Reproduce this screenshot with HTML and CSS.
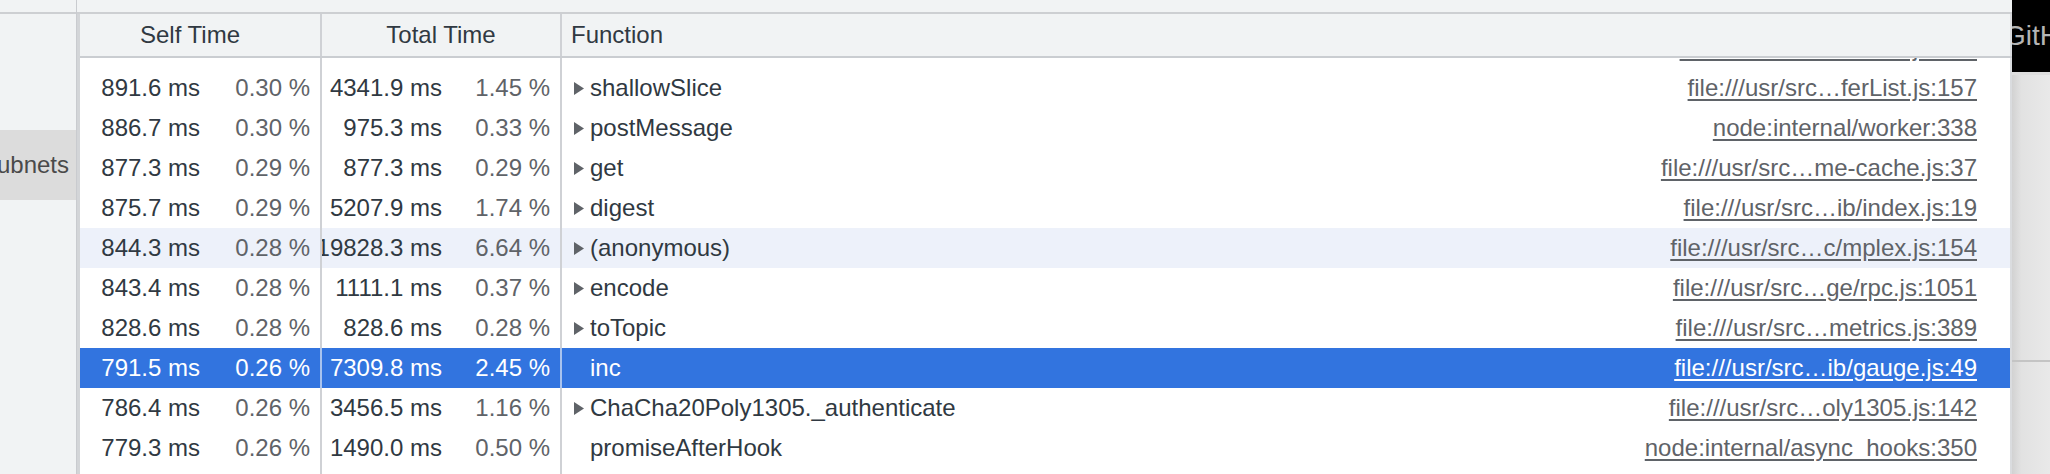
FILE: index.html
```html
<!DOCTYPE html>
<html>
<head>
<meta charset="utf-8">
<link rel="stylesheet" href="styles.css">
</head>
<body>
<div class="app">
  <aside class="side">
    <div class="side-top"></div>
    <div class="side-body">
      <div class="side-item"><span>Subnets</span></div>
    </div>
  </aside>
  <main class="main">
    <div class="topbar"></div>
    <div class="table">
      <div class="head">
        <div class="hcell c1 hself">Self Time</div>
        <div class="hcell c2 hcenter">Total Time</div>
        <div class="hcell c3 hfunc">Function</div>
      </div>
      <div class="body">
        <div class="row partial">
          <div class="cell c1"></div>
          <div class="cell c2"></div>
          <div class="cell c3 func"><span class="name"></span><span class="link">file:///usr/src…stream.js:105</span></div>
        </div>
        <div class="row">
          <div class="cell c1 num"><span class="ms">891.6 ms</span><span class="pct">0.30 %</span></div>
          <div class="cell c2 num"><span class="ms">4341.9 ms</span><span class="pct">1.45 %</span></div>
          <div class="cell c3 func"><svg class="tri" viewBox="0 0 11 13"><polygon points="0,0 10,6.5 0,13"/></svg><span class="name">shallowSlice</span><span class="link">file:///usr/src…ferList.js:157</span></div>
        </div>
        <div class="row">
          <div class="cell c1 num"><span class="ms">886.7 ms</span><span class="pct">0.30 %</span></div>
          <div class="cell c2 num"><span class="ms">975.3 ms</span><span class="pct">0.33 %</span></div>
          <div class="cell c3 func"><svg class="tri" viewBox="0 0 11 13"><polygon points="0,0 10,6.5 0,13"/></svg><span class="name">postMessage</span><span class="link">node:internal/worker:338</span></div>
        </div>
        <div class="row">
          <div class="cell c1 num"><span class="ms">877.3 ms</span><span class="pct">0.29 %</span></div>
          <div class="cell c2 num"><span class="ms">877.3 ms</span><span class="pct">0.29 %</span></div>
          <div class="cell c3 func"><svg class="tri" viewBox="0 0 11 13"><polygon points="0,0 10,6.5 0,13"/></svg><span class="name">get</span><span class="link">file:///usr/src…me-cache.js:37</span></div>
        </div>
        <div class="row">
          <div class="cell c1 num"><span class="ms">875.7 ms</span><span class="pct">0.29 %</span></div>
          <div class="cell c2 num"><span class="ms">5207.9 ms</span><span class="pct">1.74 %</span></div>
          <div class="cell c3 func"><svg class="tri" viewBox="0 0 11 13"><polygon points="0,0 10,6.5 0,13"/></svg><span class="name">digest</span><span class="link">file:///usr/src…ib/index.js:19</span></div>
        </div>
        <div class="row hover">
          <div class="cell c1 num"><span class="ms">844.3 ms</span><span class="pct">0.28 %</span></div>
          <div class="cell c2 num"><span class="ms">19828.3 ms</span><span class="pct">6.64 %</span></div>
          <div class="cell c3 func"><svg class="tri" viewBox="0 0 11 13"><polygon points="0,0 10,6.5 0,13"/></svg><span class="name">(anonymous)</span><span class="link">file:///usr/src…c/mplex.js:154</span></div>
        </div>
        <div class="row">
          <div class="cell c1 num"><span class="ms">843.4 ms</span><span class="pct">0.28 %</span></div>
          <div class="cell c2 num"><span class="ms">1111.1 ms</span><span class="pct">0.37 %</span></div>
          <div class="cell c3 func"><svg class="tri" viewBox="0 0 11 13"><polygon points="0,0 10,6.5 0,13"/></svg><span class="name">encode</span><span class="link">file:///usr/src…ge/rpc.js:1051</span></div>
        </div>
        <div class="row">
          <div class="cell c1 num"><span class="ms">828.6 ms</span><span class="pct">0.28 %</span></div>
          <div class="cell c2 num"><span class="ms">828.6 ms</span><span class="pct">0.28 %</span></div>
          <div class="cell c3 func"><svg class="tri" viewBox="0 0 11 13"><polygon points="0,0 10,6.5 0,13"/></svg><span class="name">toTopic</span><span class="link">file:///usr/src…metrics.js:389</span></div>
        </div>
        <div class="row sel">
          <div class="cell c1 num"><span class="ms">791.5 ms</span><span class="pct">0.26 %</span></div>
          <div class="cell c2 num"><span class="ms">7309.8 ms</span><span class="pct">2.45 %</span></div>
          <div class="cell c3 func"><span class="tri"></span><span class="name">inc</span><span class="link">file:///usr/src…ib/gauge.js:49</span></div>
        </div>
        <div class="row">
          <div class="cell c1 num"><span class="ms">786.4 ms</span><span class="pct">0.26 %</span></div>
          <div class="cell c2 num"><span class="ms">3456.5 ms</span><span class="pct">1.16 %</span></div>
          <div class="cell c3 func"><svg class="tri" viewBox="0 0 11 13"><polygon points="0,0 10,6.5 0,13"/></svg><span class="name">ChaCha20Poly1305._authenticate</span><span class="link">file:///usr/src…oly1305.js:142</span></div>
        </div>
        <div class="row">
          <div class="cell c1 num"><span class="ms">779.3 ms</span><span class="pct">0.26 %</span></div>
          <div class="cell c2 num"><span class="ms">1490.0 ms</span><span class="pct">0.50 %</span></div>
          <div class="cell c3 func"><span class="tri"></span><span class="name">promiseAfterHook</span><span class="link">node:internal/async_hooks:350</span></div>
        </div>
        <div class="row filler">
          <div class="cell c1"></div>
          <div class="cell c2"></div>
          <div class="cell c3"></div>
        </div>
      </div>
    </div>
  </main>
  <div class="strip">
    <div class="strip-top"><span>GitHub</span></div>
    <div class="strip-body">
      <div class="strip-upper"></div>
      <div class="strip-lower"></div>
    </div>
  </div>
</div>
</body>
</html>
```

FILE: styles.css
```css
* { box-sizing: border-box; }

body {
  margin: 0;
  width: 2050px;
  height: 474px;
  overflow: hidden;
  background: #ffffff;
  font-family: "Liberation Sans", Arial, sans-serif;
  font-size: 24px;
  color: #303942;
}

.app {
  display: flex;
  height: 474px;
}

/* left sidebar */
.side {
  width: 77px;
  flex: none;
  display: flex;
  flex-direction: column;
  background: #f1f3f4;
  border-right: 1px solid #c9cbcf;
}

.side-top {
  height: 14px;
  flex: none;
  border-bottom: 2px solid #cdcfd2;
}

.side-body {
  flex: 1;
  padding-top: 116px;
}

.side-item {
  height: 70px;
  background: #dcdcdc;
  display: flex;
  align-items: center;
  justify-content: flex-end;
  padding-right: 7px;
  overflow: hidden;
  white-space: nowrap;
  color: #4a4a4a;
}

/* main data grid */
.main {
  width: 1935px;
  flex: none;
  display: flex;
  flex-direction: column;
}

.topbar {
  height: 14px;
  flex: none;
  background: #f1f3f4;
  border-bottom: 2px solid #cdcfd2;
}

.table {
  flex: 1;
  display: flex;
  flex-direction: column;
  border-left: 3px solid #d3d5d8;
  min-height: 0;
}

.head {
  display: flex;
  height: 44px;
  flex: none;
  background: #f1f3f4;
  border-bottom: 2px solid #cacdd1;
}

.c1 { width: 242px; flex: none; border-right: 2px solid #cfd1d5; }
.c2 { width: 240px; flex: none; border-right: 2px solid #cfd1d5; }
.c3 { flex: 1; min-width: 0; border-right: 2px solid #dadcdf; }

.hcell {
  display: flex;
  align-items: center;
  white-space: nowrap;
  color: #303942;
}

.hself { justify-content: center; padding-right: 20px; }
.hcenter { justify-content: center; }
.hfunc { padding-left: 9px; }

.body {
  flex: 1;
  display: flex;
  flex-direction: column;
  overflow: hidden;
  min-height: 0;
}

.row {
  display: flex;
  height: 40px;
  flex: none;
  line-height: 40px;
}

.row.partial { margin-top: -30px; }

.row.filler { flex: 1 0 auto; height: auto; }

.cell {
  overflow: hidden;
  white-space: nowrap;
}

.num { display: flex; }

.ms {
  flex: 0 0 120px;
  min-width: 0;
  display: flex;
  justify-content: flex-end;
  color: #303942;
}

.pct {
  flex: 1;
  text-align: right;
  padding-right: 10px;
  color: #5f6368;
}

.func {
  display: flex;
  align-items: center;
  padding-left: 12px;
  padding-right: 33px;
}

.tri {
  width: 11px;
  height: 13px;
  flex: none;
  margin-right: 5px;
  fill: #5f6368;
}

.name {
  flex: 1;
  color: #303942;
}

.link {
  color: #5f6368;
  text-decoration: underline;
  text-underline-offset: 3px;
}

.row.hover { background: #edf1fa; }

.row.sel { background: #3274df; }
.row.sel .ms,
.row.sel .pct,
.row.sel .name,
.row.sel .link { color: #ffffff; }
.row.sel .c1,
.row.sel .c2 { border-right-color: #a9c3ee; }

/* right strip */
.strip {
  flex: 1;
  min-width: 0;
  overflow: hidden;
  display: flex;
  flex-direction: column;
}

.strip-top {
  height: 72px;
  flex: none;
  background: #000000;
  color: #b4b4b4;
  font-size: 28px;
  display: flex;
  align-items: center;
  overflow: hidden;
  white-space: nowrap;
  text-indent: -8px;
}

.strip-body {
  flex: 1;
  display: flex;
  flex-direction: column;
  border-top: 3px solid #dedede;
  background: linear-gradient(to right, #d2d2d2, #e2e2e2 25%, #e9e9e9);
}

.strip-upper {
  height: 287px;
  flex: none;
  border-bottom: 2px solid #c4c4c4;
}

.strip-lower { flex: 1; }
```
